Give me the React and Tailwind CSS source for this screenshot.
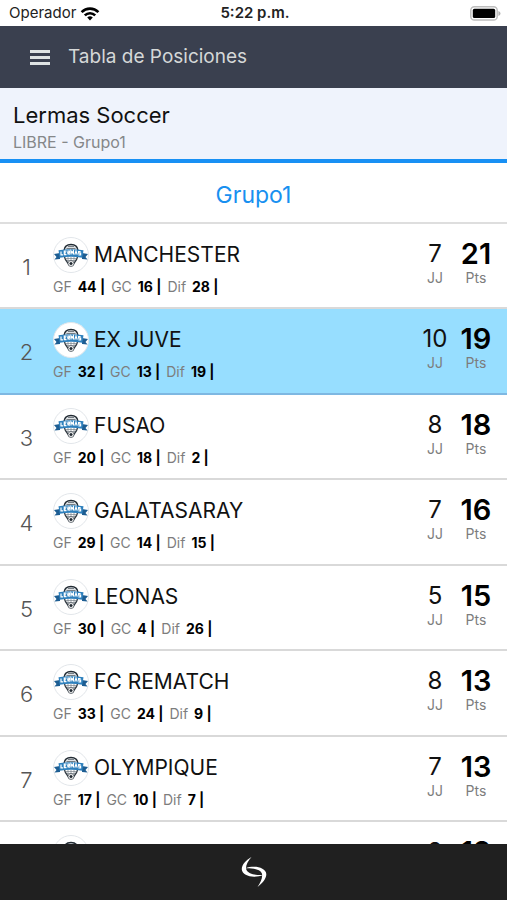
import React from 'react';

const teams = [
  { name: 'MANCHESTER', gf: 44, gc: 16, dif: 28, jj: 7, pts: 21 },
  { name: 'EX JUVE', gf: 32, gc: 13, dif: 19, jj: 10, pts: 19, active: true },
  { name: 'FUSAO', gf: 20, gc: 18, dif: 2, jj: 8, pts: 18 },
  { name: 'GALATASARAY', gf: 29, gc: 14, dif: 15, jj: 7, pts: 16 },
  { name: 'LEONAS', gf: 30, gc: 4, dif: 26, jj: 5, pts: 15 },
  { name: 'FC REMATCH', gf: 33, gc: 24, dif: 9, jj: 8, pts: 13 },
  { name: 'OLYMPIQUE', gf: 17, gc: 10, dif: 7, jj: 7, pts: 13 },
  { jj: 8, pts: 12 },
];

function WifiIcon() {
  return (
    <svg viewBox="0 0 20 15" className="h-[15px] w-5" fill="none" stroke="#000" strokeWidth="2.6" aria-hidden="true">
      <path d="M1.6 6.1a12 12 0 0 1 16.8 0" />
      <path d="M4.8 9.4a7.4 7.4 0 0 1 10.4 0" />
      <path d="M7.2 11.6a4 4 0 0 1 5.6 0L10 14.6z" fill="#000" stroke="none" />
    </svg>
  );
}

function BatteryIcon() {
  return (
    <svg viewBox="0 0 31 15" className="h-[15px] w-[31px]" aria-hidden="true">
      <rect x="0.8" y="0.8" width="26.4" height="13.2" rx="3.6" fill="#fff" stroke="#bdbdbd" strokeWidth="1.5" />
      <rect x="2.8" y="2.8" width="22.4" height="9.2" rx="1.6" fill="#000" />
      <path d="M28.4 5v5c1.2-.5 2.1-1.4 2.1-2.5S29.6 5.5 28.4 5z" fill="#b0b0b0" />
    </svg>
  );
}

function Crest() {
  return (
    <svg viewBox="0 0 36 36" className="size-9 shrink-0" aria-hidden="true">
      <circle cx="18" cy="18" r="17.5" fill="#fff" stroke="#e2e6ea" />
      <path d="M11 13.5C11.5 9 14.5 7.6 18 7.6s6.5 1.4 7 5.9" fill="#dfe3e6" stroke="#222b33" strokeWidth="1.5" />
      <path d="M13.5 11.5h9M15 9.5h6" stroke="#59636b" strokeWidth="0.8" />
      <path d="M11.5 20c.8 3.600 3.300 5 4.500 8M24.500 20c-.8 3.600-3.300 5-4.500 8" fill="none" stroke="#333c44" strokeWidth="1.3" />
      <path d="M12.5 21.5h11M14 23.500h8M15 20v4M18 20v4M21 20v4" stroke="#79828a" strokeWidth="0.7" />
      <path d="M1 17l6-1v6l-5.500.5 2-2.600zM35 17l-6-1v6l5.500.5-2-2.600z" fill="#1d5d92" />
      <path d="M5.500 13.300q12.500-2.200 25 0l-1.200 7.400q-11.300-2-22.600 0z" fill="#2e80bd" />
      <path d="M8 14.600v3.300h2M13.500 14.100H11.300v3.500h2.200M11.300 15.900h1.700M15 17.500V14h1.500v1.600L15 15.800l1.700 1.700M18 17.500V14l1.200 1.700 1.200-1.700v3.500M21.800 17.600l1.200-3.500 1.200 3.500M27.600 14.700h-2v1.400h2v1.700h-2.200" fill="none" stroke="#fff" strokeWidth="1.2" />
      <circle cx="18" cy="26.5" r="3" fill="#fff" stroke="#4a535b" strokeWidth="0.8" />
      <path d="M18 25l1.400 1-.5 1.700h-1.800l-.5-1.700z" fill="#222b33" stroke="#222b33" strokeWidth="0.5" />
    </svg>
  );
}

function Stat({ label, value }) {
  return (
    <span>
      {label} <b className="ml-[2px] font-bold text-black">{value} |</b>
    </span>
  );
}

function TeamRow({ team, rank }) {
  return (
    <tr
      className={`h-[85px] align-top even:h-[86px] [&>td]:border-b-2 ${
        team.active ? 'bg-[#97deff] [&>td]:border-[#7eb8e2]' : 'bg-white [&>td]:border-[#d9d9d9]'
      }`}
    >
      <td className="w-[53px] pt-[27px] text-center text-[22px] leading-8 font-light text-[#555]">{rank}</td>
      <td className="pt-[13px]">
        <div className="flex h-9 items-center gap-[5px]">
          <Crest />
          <span className="text-[21px] leading-8 text-[#111]">{team.name}</span>
        </div>
        {team.name && (
          <div className="mt-1 flex gap-[6px] text-sm leading-5 text-[#7d7d7d]">
            <Stat label="GF" value={team.gf} />
            <Stat label="GC" value={team.gc} />
            <Stat label="Dif" value={team.dif} />
          </div>
        )}
      </td>
      <td className="w-8 pt-[14px] text-center">
        <div className="text-2xl leading-8 text-[#111]">{team.jj}</div>
        <div className="text-sm leading-4 text-[#7d7d7d]">JJ</div>
      </td>
      <td className="w-14 pt-[14px] pr-[6px] text-center">
        <div className="text-[29px] leading-8 font-semibold text-black">{team.pts}</div>
        <div className="text-sm leading-4 text-[#7d7d7d]">Pts</div>
      </td>
    </tr>
  );
}

export default function App() {
  return (
    <div className="flex h-screen flex-col overflow-hidden bg-white font-['Inter',sans-serif]">
      <div className="grid h-[26px] shrink-0 grid-cols-3 items-center pr-[6px] pl-[9px] text-[15px] leading-5 text-[#222]">
        <div className="flex items-center gap-1">
          Operador
          <WifiIcon />
        </div>
        <div className="text-center font-semibold">5:22 p.m.</div>
        <div className="flex justify-end">
          <BatteryIcon />
        </div>
      </div>

      <header className="flex h-[62px] shrink-0 items-center gap-[18px] bg-[#3a404f] pl-[30px] text-[#d5d8d8]">
        <button type="button" aria-label="Menú" className="flex w-5 flex-col gap-[3px]">
          <span className="h-[3px] w-full bg-[#dfe4e4]" />
          <span className="h-[3px] w-full bg-[#dfe4e4]" />
          <span className="h-[3px] w-full bg-[#dfe4e4]" />
        </button>
        <h1 className="text-[19px] leading-6">Tabla de Posiciones</h1>
      </header>

      <section className="h-[75px] shrink-0 border-b-4 border-[#1890f4] bg-[#eff3fc] px-[13px] pt-3">
        <h2 className="text-[22px] leading-[30px] text-[#111]">Lermas Soccer</h2>
        <p className="text-base leading-6 text-[#858789]">LIBRE - Grupo1</p>
      </section>

      <main className="min-h-0 flex-1 overflow-hidden">
        <h3 className="flex h-[61px] items-center justify-center border-b-2 border-[#dedede] pt-[6px] text-[23px] text-[#1890f0]">
          Grupo1
        </h3>
        <table className="w-full border-separate border-spacing-0">
          <tbody>
            {teams.map((team, i) => (
              <TeamRow key={i} team={team} rank={i + 1} />
            ))}
          </tbody>
        </table>
      </main>

      <footer className="flex h-14 shrink-0 items-center justify-center bg-[#202020]">
        <svg viewBox="0 0 36 44" className="h-11 w-9" fill="#fff" aria-hidden="true">
          <path d="M15.500 7C10 10 5.500 15 5.800 19.500c.3 4.500 6.200 7.200 12.200 7.200 3.500 0 6.500-.5 9-1.700-6.500.3-14.500-.8-16.500-5C9 16.500 11.500 11.500 15.500 7z" />
          <path d="M21.500 37c5-3.500 9-8.500 8.800-13-.3-4.500-6.200-7.200-12.200-7.200-3.500 0-6 .3-8.600 1.500 6.500-.2 14.500.8 16.300 5 1.200 3.500-.8 9-4.300 13.700z" />
        </svg>
      </footer>
    </div>
  );
}
